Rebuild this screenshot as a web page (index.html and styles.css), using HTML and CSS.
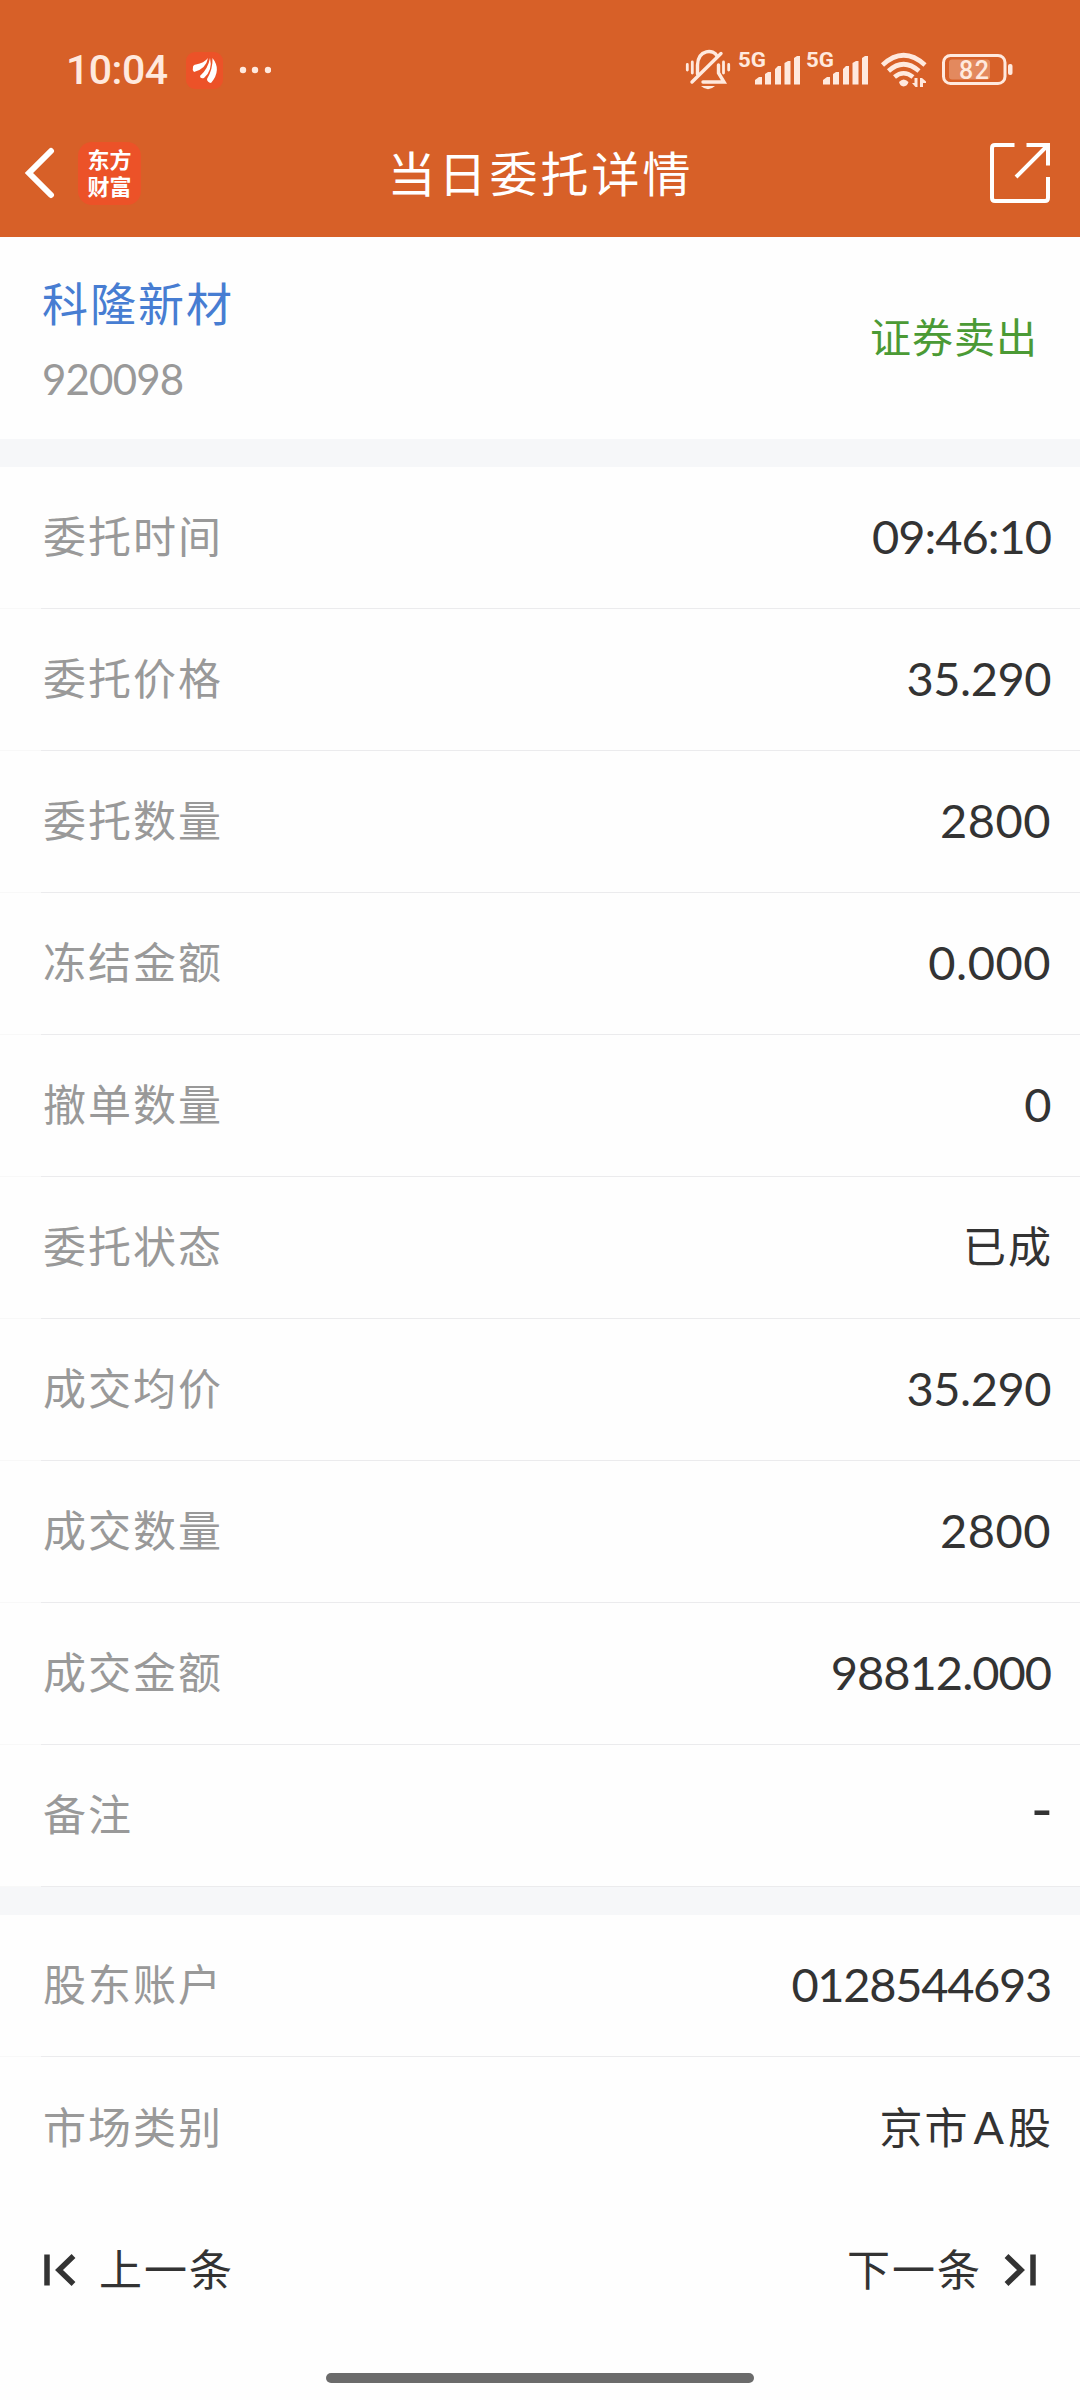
FILE: index.html
```html
<!DOCTYPE html>
<html lang="zh-CN">
<head>
<meta charset="utf-8">
<title>当日委托详情</title>
<link rel="stylesheet" href="styles.css">
</head>
<body>
<header class="header">
  <div class="status-bar">
    <span class="clock">10:04</span>
    <svg class="app-icon" width="37" height="37" viewBox="0 0 37 37">
      <rect width="37" height="37" rx="9" fill="#ec5228"/>
      <path d="M7 15 Q7 13 10 12.500 Q18 11 22 6 Q20 17 8 20 Q6 18 7 15Z M14 24 Q22 17 24 6 Q27 18 18 26 Q14 27 14 24Z M21 27 Q27 17 26.500 6 Q36 18 25 31 Q21 30 21 27Z" fill="#fff"/>
    </svg>
    <svg class="more" width="32" height="8" viewBox="0 0 32 8" fill="#ffe9de">
      <circle cx="4" cy="4" r="3.200"/><circle cx="16" cy="4" r="3.200"/><circle cx="29" cy="4" r="3.200"/>
    </svg>
    <svg class="status-icons" width="330" height="60" viewBox="684 40 330 60" fill="#ffe9de">
      <!-- muted bell -->
      <g fill="none" stroke="#ffe9de" stroke-width="3.400" stroke-linecap="round">
        <path d="M697.500 74 V65 C698 49 714 49 717 56"/>
        <path d="M718.500 65 V73 L724 82 H703"/>
        <path d="M692 82 L721 53.500"/>
        <path stroke-width="2.800" d="M687.300 64.500 V70 M692.300 62 V73 M723.500 62 V73 M728.700 64.500 V70"/>
      </g>
      <path d="M701 86 H715 Q708 92.500 701 86Z"/>
      <!-- sim 1 -->
      <text class="net" x="738" y="67" textLength="28" lengthAdjust="spacingAndGlyphs">5G</text>
      <path d="M755 84.500 V80 L759 77 H762 V84.500Z M765 84.500 V74 L768 72 H771 V84.500Z M775 84.500 V69 L778 66 H781 V84.500Z M784.500 84.500 V63 L788 61 H790.500 V84.500Z M794 84.500 V58 L797 56 H800 V84.500Z"/>
      <!-- sim 2 -->
      <text class="net" x="806" y="67" textLength="28" lengthAdjust="spacingAndGlyphs">5G</text>
      <path transform="translate(68 0)" d="M755 84.500 V80 L759 77 H762 V84.500Z M765 84.500 V74 L768 72 H771 V84.500Z M775 84.500 V69 L778 66 H781 V84.500Z M784.500 84.500 V63 L788 61 H790.500 V84.500Z M794 84.500 V58 L797 56 H800 V84.500Z"/>
      <!-- wifi -->
      <g fill="none" stroke="#ffe9de" stroke-width="4.600">
        <path d="M882.500 65 Q903.500 45.500 925 65"/>
        <path d="M888.500 71 Q903.500 57.500 919 71"/>
        <path d="M894.500 77 Q903.500 69.500 913 77"/>
      </g>
      <path d="M899 82 Q903.500 77 908.500 82 Q907.500 86 903.500 86.500 Q900 86 899 82Z"/>
      <path d="M912 83 H914.500 V78 H917.500 V87 H915.500Z M920 87 V78 H922 L926 81.500 V83 H923 V87Z"/>
      <!-- battery -->
      <rect x="943.500" y="55.500" width="61.500" height="28" rx="7" fill="none" stroke="#ffe9de" stroke-width="3"/>
      <rect x="949" y="59.500" width="41" height="20" rx="3" opacity=".3"/>
      <rect x="1008" y="64" width="4.500" height="11" rx="2"/>
      <text class="level" x="959" y="79" textLength="30">82</text>
    </svg>
  </div>
  <nav class="nav">
    <div class="nav-left">
      <svg width="32" height="52" viewBox="0 0 32 52" fill="none" stroke="#fff" stroke-width="6" stroke-linecap="round">
        <path d="M27 4 L5 26 L27 48"/>
      </svg>
      <div class="logo">东方<br>财富</div>
    </div>
    <h1 class="title">当日委托详情</h1>
    <svg class="share" width="60" height="60" viewBox="0 0 60 60" fill="none" stroke="#fff" stroke-width="4">
      <path d="M24.500 2 H5 Q2 2 2 5 V55 Q2 58 5 58 H55 Q58 58 58 55 V34"/>
      <path d="M36.500 2 H58 V22.500 M58 2 L26 34"/>
    </svg>
  </nav>
</header>

<section class="stock">
  <div>
    <div class="stock-name">科隆新材</div>
    <div class="stock-code">920098</div>
  </div>
  <div class="direction">证券卖出</div>
</section>

<div class="gap"></div>

<ul class="list">
  <li class="row"><span class="label">委托时间</span><span class="value time">09:46:10</span></li>
  <li class="row"><span class="label">委托价格</span><span class="value">35.290</span></li>
  <li class="row"><span class="label">委托数量</span><span class="value count">2800</span></li>
  <li class="row"><span class="label">冻结金额</span><span class="value count">0.000</span></li>
  <li class="row"><span class="label">撤单数量</span><span class="value">0</span></li>
  <li class="row"><span class="label">委托状态</span><span class="value text">已成</span></li>
  <li class="row"><span class="label">成交均价</span><span class="value">35.290</span></li>
  <li class="row"><span class="label">成交数量</span><span class="value count">2800</span></li>
  <li class="row"><span class="label">成交金额</span><span class="value amount">98812.000</span></li>
  <li class="row"><span class="label">备注</span><span class="value empty">-</span></li>
</ul>

<div class="gap"></div>

<ul class="list last">
  <li class="row"><span class="label">股东账户</span><span class="value account">0128544693</span></li>
  <li class="row"><span class="label">市场类别</span><span class="value text">京市<span class="latin">A</span>股</span></li>
</ul>

<footer class="pager">
  <a class="page-link">
    <svg width="32" height="34" viewBox="0 0 32 34" fill="none" stroke="#333" stroke-width="5.500">
      <path d="M3 1.500 V32.500 M29.500 3 L15 17 L29.500 31"/>
    </svg>
    <span class="page-text">上一条</span>
  </a>
  <a class="page-link">
    <span class="page-text">下一条</span>
    <svg width="32" height="34" viewBox="0 0 32 34" fill="none" stroke="#333" stroke-width="5.500">
      <path d="M29 1.500 V32.500 M2.500 3 L17 17 L2.500 31"/>
    </svg>
  </a>
</footer>
<div class="home-bar"></div>
</body>
</html>
```

FILE: styles.css
```css
* {
  margin: 0;
  padding: 0;
  box-sizing: border-box;
}

body {
  width: 1080px;
  height: 2400px;
  overflow: hidden;
  background: #fefefe;
  color: #333;
  font-family: Lato, "Noto Sans CJK SC", sans-serif;
}

svg {
  display: block;
}

/* header */
.header {
  height: 237px;
  padding-top: 31px;
  background: #d76028;
  color: #fff;
}

.status-bar {
  display: flex;
  align-items: center;
  height: 78px;
  padding: 0 66px;
}

.clock {
  width: 120px;
  font: 500 41px Roboto, sans-serif;
  letter-spacing: -.5px;
  color: #ffe9de;
}

.more {
  margin-left: 16px;
}

.status-icons {
  margin-left: auto;
}

.net {
  font: 700 21px Roboto, sans-serif;
}

.level {
  font: 500 25px Roboto, sans-serif;
}

.nav {
  display: flex;
  align-items: center;
  justify-content: space-between;
  height: 128px;
  padding: 0 30px 0 24px;
}

.nav-left {
  display: flex;
  align-items: center;
  gap: 22px;
  width: 180px;
}

.logo {
  width: 63px;
  height: 63px;
  padding-top: 3px;
  border-radius: 14px;
  background: #ec5228;
  font: 700 22px/27px "Noto Sans CJK SC", sans-serif;
  text-align: center;
}

.title {
  padding: 0 0 5px 7px;
  font-size: 48px;
  font-weight: 400;
  letter-spacing: 3px;
}

.share {
  margin-left: 120px;
}

/* stock summary */
.stock {
  display: flex;
  align-items: center;
  justify-content: space-between;
  height: 202px;
  padding: 0 42px;
}

.stock-name {
  padding-top: 7px;
  font-size: 46px;
  line-height: 68px;
  letter-spacing: 2px;
  color: #477dd2;
}

.stock-code {
  padding-top: 7px;
  font-size: 42px;
  line-height: 68px;
  letter-spacing: -.8px;
  color: #999;
}

.direction {
  padding-bottom: 6px;
  font-size: 41px;
  letter-spacing: 1px;
  color: #4b9a35;
}

.gap {
  height: 28px;
  background: #f6f7f9;
}

/* detail rows */
.list {
  list-style: none;
}

.row {
  display: flex;
  align-items: center;
  justify-content: space-between;
  height: 142px;
  padding: 0 29px 0 42px;
  border-bottom: 1px solid;
  border-image: linear-gradient(to right, #f8f8f8 42px, #ebebed 42px) 1;
}

.last .row:last-child {
  border: none;
}

.label {
  padding: 0 0 7px 1px;
  font-size: 43px;
  letter-spacing: 2px;
  color: #999;
}

.value {
  padding-bottom: 4px;
  font-size: 47px;
  letter-spacing: -.5px;
}

.value.time {
  letter-spacing: -1px;
}

.value.count {
  letter-spacing: .5px;
}

.value.amount {
  letter-spacing: -1px;
}

.value.account {
  letter-spacing: -1.3px;
}

.value.empty {
  padding-bottom: 16px;
  font-size: 60px;
  letter-spacing: -2px;
}

.value.text {
  margin-right: -2px;
  padding-bottom: 7px;
  font-size: 43px;
  letter-spacing: 2px;
}

.latin {
  margin: 0 2px 0 4px;
  font-size: 45px;
}

/* previous / next */
.pager {
  display: flex;
  align-items: center;
  justify-content: space-between;
  height: 142px;
  padding: 0 44px;
}

.page-link {
  display: flex;
  align-items: center;
  gap: 22px;
  font-size: 43px;
  letter-spacing: 2px;
}

.page-text {
  padding: 0 0 6px 1px;
}

.home-bar {
  width: 428px;
  height: 10px;
  margin: 32px auto 0;
  border-radius: 5px;
  background: #6b6b6b;
}
```
